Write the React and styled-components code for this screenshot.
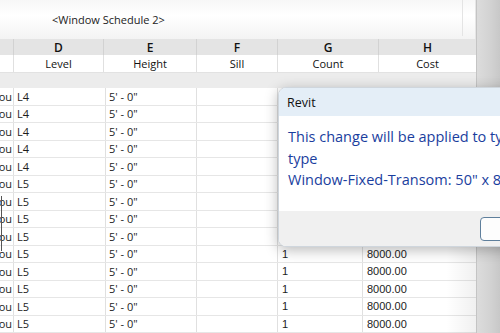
import React from 'react';
import styled, { createGlobalStyle } from 'styled-components';

const GlobalStyle = createGlobalStyle`
    html, body {
        margin: 0;
        padding: 0;
        background: #ffffff;
        overflow: hidden;
    }
`;

const Sheet = styled.div`
    position: relative;
    width: 500px;
    height: 333px;
    overflow: hidden;
    display: flex;
    font-family: 'Open Sans', 'Noto Sans', sans-serif;
    color: #1e1e1e;
`;

const Main = styled.div`
    width: 476px;
    display: flex;
    flex-direction: column;
`;

const ScrollStrip = styled.div`
    flex: 1;
    background: linear-gradient(90deg, #dcdcdc 0%, #d2d2d2 60%, #c8c8c8 100%);
    border-left: 1px solid #c4c4c4;
`;

const TitleBand = styled.div`
    height: 39px;
    display: flex;
    align-items: center;
    padding-left: 52px;
    box-sizing: border-box;
    background: linear-gradient(180deg, #f7f7f7 0%, #ffffff 40%, #f3f3f3 100%);
    border-right: 1px solid #e6e6e6;
    font-size: 11px;
    color: #222;
    position: relative;
`;

const TitleDivider = styled.div`
    position: absolute;
    left: 462px;
    top: 0;
    height: 36px;
    width: 1px;
    background: #e4e4e4;
`;

const HeadRow = styled.div`
    display: grid;
    grid-template-columns: 13px 90px 93px 81px 101px 98px;
    height: ${p => p.$h}px;
    background: ${p => p.$bg};
`;

const HeadCell = styled.div`
    display: flex;
    align-items: center;
    justify-content: center;
    border-left: 1px solid ${p => p.$line};
    font-size: ${p => p.$size}px;
    font-weight: ${p => p.$weight};
    color: #111;
    &:first-child {
        border-left: none;
    }
`;

const GroupRow = styled.div`
    height: 16px;
    background: #ececec;
    border-top: 1px solid #e2e2e2;
    box-sizing: border-box;
`;

const BodyRow = styled.div`
    display: grid;
    grid-template-columns: 13px 92px 91px 81px 85px 114px;
    height: 17.5px;
    box-sizing: border-box;
    border-bottom: 1px solid #e6e6e6;
    background: #ffffff;
`;

const Cell = styled.div`
    display: flex;
    align-items: center;
    padding-left: ${p => p.$pad ?? 3}px;
    border-left: 1px solid #e0e0e0;
    font-family: ${p => p.$arial ? "'Liberation Sans', Arial, sans-serif" : "'Open Sans', 'Noto Sans', sans-serif"};
    font-size: 11px;
    color: #1c1c1c;
    white-space: nowrap;
    overflow: hidden;
    &:first-child {
        border-left: none;
        justify-content: flex-end;
        padding-left: 0;
        padding-right: 1px;
    }
`;

const Dialog = styled.div`
    position: absolute;
    left: 278px;
    top: 87px;
    width: 250px;
    height: 158px;
    border-radius: 8px;
    overflow: hidden;
    background: #ffffff;
    border: 1px solid #cfd6dd;
    box-shadow: 0 3px 14px rgba(0, 0, 0, 0.28);
    display: flex;
    flex-direction: column;
    font-family: 'Open Sans', 'Noto Sans', sans-serif;
`;

const DialogTitle = styled.div`
    height: 28px;
    flex: none;
    background: #e4eef7;
    display: flex;
    align-items: center;
    padding-left: 8px;
    font-size: 12.5px;
    color: #111;
`;

const DialogBody = styled.div`
    flex: 1;
    padding: 10px 0 0 9px;
    font-size: 14.5px;
    line-height: 21.5px;
    color: #1a3e9e;
    white-space: nowrap;
`;

const DialogFooter = styled.div`
    height: 35px;
    flex: none;
    background: #f0f0f0;
    display: flex;
    align-items: center;
    padding-left: 201px;
`;

const DialogButton = styled.div`
    width: 60px;
    height: 24px;
    box-sizing: border-box;
    border: 1.5px solid #5f7f9c;
    border-radius: 4px;
    background: #fdfdfd;
`;

const CursorMark = styled.div`
    position: absolute;
    left: 1px;
    top: 196px;
    width: 1px;
    height: 55px;
    background: #555;
`;

const ShadeEdge = styled.div`
    position: absolute;
    left: 446px;
    top: 245px;
    width: 30px;
    height: 88px;
    background: linear-gradient(90deg, rgba(0,0,0,0) 0%, rgba(0,0,0,0.06) 100%);
    pointer-events: none;
`;

const letters = ['', 'D', 'E', 'F', 'G', 'H'];
const names = ['', 'Level', 'Height', 'Sill', 'Count', 'Cost'];

const rows = [
    ...Array(5).fill('L4'),
    ...Array(9).fill('L5'),
];

export default function App() {
    return (
        <Sheet>
            <GlobalStyle />
            <Main>
                <TitleBand>
                    &lt;Window Schedule 2&gt;
                    <TitleDivider />
                </TitleBand>
                <HeadRow $h={16} $bg="#e4e4e4">
                    {letters.map((l, i) => (
                        <HeadCell key={i} $line="#d2d2d2" $size={12} $weight={600}>{l}</HeadCell>
                    ))}
                </HeadRow>
                <HeadRow $h={17} $bg="#ffffff">
                    {names.map((n, i) => (
                        <HeadCell key={i} $line="#e0e0e0" $size={11} $weight={500}>{n}</HeadCell>
                    ))}
                </HeadRow>
                <GroupRow />
                {rows.map((lvl, i) => {
                    const visible = i >= 9;
                    return (
                        <BodyRow key={i}>
                            <Cell>ou</Cell>
                            <Cell>{lvl}</Cell>
                            <Cell>5' - 0"</Cell>
                            <Cell />
                            <Cell $arial $pad={4}>{visible ? '1' : ''}</Cell>
                            <Cell $arial $pad={4}>{visible ? '8000.00' : ''}</Cell>
                        </BodyRow>
                    );
                })}
            </Main>
            <ScrollStrip />
            <CursorMark />
            <ShadeEdge />
            <Dialog>
                <DialogTitle>Revit</DialogTitle>
                <DialogBody>
                    This change will be applied to type<br />
                    type<br />
                    Window-Fixed-Transom: 50" x 80"
                </DialogBody>
                <DialogFooter>
                    <DialogButton />
                </DialogFooter>
            </Dialog>
        </Sheet>
    );
}
